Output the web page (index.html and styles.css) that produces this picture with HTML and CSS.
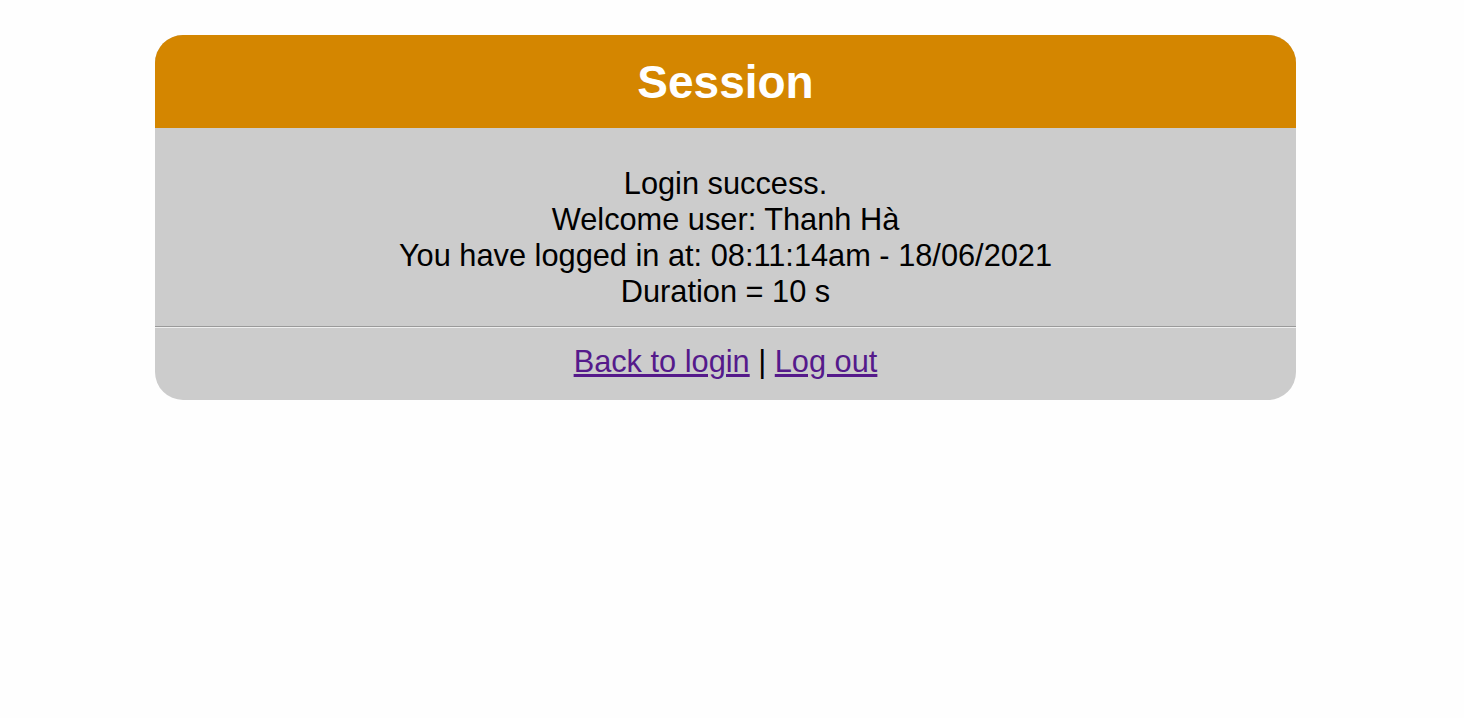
FILE: index.html
```html
<!DOCTYPE html>
<html>
<head>
<meta charset="utf-8">
<link rel="stylesheet" href="styles.css">
</head>
<body>
<div class="card">
  <div class="card-header"><h1 class="title">Session</h1></div>
  <div class="card-body">
    <div class="msg">Login success.</div>
    <div class="msg">Welcome user: Thanh Hà</div>
    <div class="msg">You have logged in at: 08:11:14am - 18/06/2021</div>
    <div class="msg">Duration = 10 s</div>
  </div>
  <hr class="sep">
  <div class="card-footer">
    <a class="link" href="#">Back to login</a> | <a class="link" href="#">Log out</a>
  </div>
</div>
</body>
</html>
```
FILE: styles.css
```css
html, body {
  margin: 0;
  padding: 0;
  background: #fefefe;
}
body {
  font-family: "Liberation Sans", Arial, sans-serif;
}
.card {
  margin: 35px 0 0 155px;
  width: 1141px;
  background: #cccccc;
  border-radius: 28px;
  overflow: hidden;
}
.card-header {
  background: #d48600;
  height: 93px;
  display: flex;
  align-items: center;
  justify-content: center;
}
.title {
  margin: 0;
  color: #ffffff;
  font-size: 46px;
  font-weight: bold;
  line-height: 1;
}
.card-body {
  padding-top: 38px;
  text-align: center;
  font-size: 30.75px;
  line-height: 36px;
  color: #000;
}
.sep {
  margin: 16px 0 0 0;
  height: 0;
  border: none;
  border-top: 1px solid #9a9a9a;
  border-bottom: 1px solid #eeeeee;
}
.card-footer {
  padding: 16px 0 20px;
  text-align: center;
  font-size: 30.75px;
  line-height: 36px;
  color: #000;
}
.link {
  color: #551a8b;
  text-decoration: underline;
}
```
